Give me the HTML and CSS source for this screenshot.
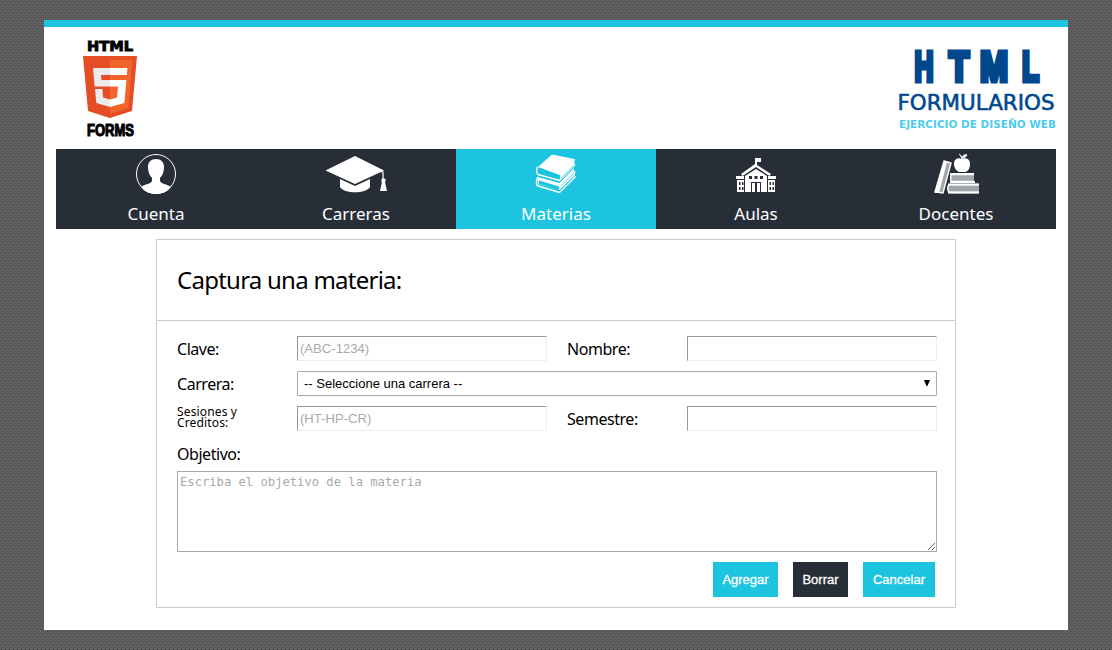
FILE: index.html
```html
<!DOCTYPE html>
<html lang="es">
<head>
<meta charset="utf-8">
<title>HTML Formularios</title>
<link rel="stylesheet" href="styles.css">
</head>
<body>
<div class="page">
  <header class="header">
    <svg class="logo" width="80" height="104" viewBox="0 0 80 104" role="img" aria-label="HTML Forms">
      <text class="logo-html" x="18" y="16" textLength="46" lengthAdjust="spacingAndGlyphs">HTML</text>
      <path fill="#e44d26" d="M14 21h54l-5 55-22 7-22-7z"/>
      <path fill="#f16529" d="M41 25h22.500l-4.300 48L41 79z"/>
      <path fill="#ebebeb" d="M41 33H24l1.600 18.500H41V45h-8.500l-.500-5H41zM41 64.500l-7-2-.500-8.500H26l1.300 14L41 72z"/>
      <path fill="#fff" d="M41 33h17.500l-.700 7H41zM41 45h16.500l-2.200 23L41 72v-7.500l7-2 1-11H41z"/>
      <text class="logo-forms" x="18" y="101" textLength="47" lengthAdjust="spacingAndGlyphs">FORMS</text>
    </svg>
    <svg class="brand" width="164" height="90" viewBox="0 0 164 90" role="img" aria-label="HTML Formularios">
      <g class="brand-html">
        <text x="22.500" y="38.500" textLength="19" lengthAdjust="spacingAndGlyphs">H</text>
        <text x="57" y="38.500" textLength="20" lengthAdjust="spacingAndGlyphs">T</text>
        <text x="88" y="38.500" textLength="28" lengthAdjust="spacingAndGlyphs">M</text>
        <text x="130" y="38.500" textLength="17" lengthAdjust="spacingAndGlyphs">L</text>
      </g>
      <text class="brand-form" x="5.500" y="68" textLength="157" lengthAdjust="spacingAndGlyphs">FORMULARIOS</text>
      <text class="brand-sub" x="7" y="86" textLength="157" lengthAdjust="spacingAndGlyphs">EJERCICIO DE DISEÑO WEB</text>
    </svg>
  </header>
  <nav class="nav">
    <a class="tab">
      <svg width="64" height="50" viewBox="0 0 64 50" fill="#fff"><circle cx="32" cy="25" r="19.500" fill="none" stroke="#fff"/><path d="M32 10c-5 0-8 3-8 8 0 4 1 8 4 11v3c-1 3-7 3-11 6 4 5 9 7 15 7s11-2 15-7c-4-3-10-3-11-6v-3c3-3 4-7 4-11 0-5-3-8-8-8z"/></svg>
      <span>Cuenta</span>
    </a>
    <a class="tab">
      <svg width="64" height="50" viewBox="0 0 64 50" fill="#fff"><path d="M1.500 21.500L31 7l29 14.500L31 35z"/><path d="M16 30l15 7 15-7v8c-4 7-26 7-30 0z"/><path d="M30 20l29 3v11" fill="none" stroke="#fff" stroke-width="1.200"/><circle cx="59.500" cy="31.500" r="2.200"/><path d="M58 33h3l2 9h-7z"/></svg>
      <span>Carreras</span>
    </a>
    <a class="tab active">
      <svg width="64" height="50" viewBox="0 0 64 50" fill="#fff"><path d="M14 18L28 5.500 50 10 35.500 26z"/><path d="M14 28l21.500 6L50 19v8L35.500 41 14 35z" opacity=".95"/><g fill="none" stroke="#fff" stroke-width="1.500"><path d="M14 18c-2 1-2 6 0 7.500l21.500 6L50.500 16c-1-1-1-4 0-6M14 28c-2 2-2 8 0 9l21.500 6.500L51 28c-1-1-1-4 0-6"/></g><path fill="#1cc4e0" d="M15 20.500l20 5.500v3.500l-20-6zM15 31.500l20 6V41l-20-6z"/><path d="M36 24l14-14v6L36 31z"/><path d="M37 29l13-13M37 37l13-13M37 40l13-13" stroke="#1cc4e0" stroke-width=".6"/></svg>
      <span>Materias</span>
    </a>
    <a class="tab">
      <svg width="64" height="50" viewBox="0 0 64 50" fill="#fff"><path d="M31 15V9h6v4h-4v3l14 9-1.500 2L32 18l-13.500 9-1.500-2z"/><path d="M32 20l11 7v16h-6V33H27v10h-6V27z"/><path d="M28 34h3v9h-3zM33 34h3v9h-3zM12 27h8v3h-8zM44 27h8v3h-8zM13 31h7v12h-7zM44 31h7v12h-7z"/><path fill="#282e38" d="M25 27h3v3h-3zM30.500 27h3v3h-3zM36 27h3v3h-3zM15 33h1.500v3H15zM18 33h1.500v3H18zM45.500 33H47v3h-1.500zM48.500 33H50v3h-1.500zM15 38h1.500v3H15zM18 38h1.500v3H18zM45.500 38H47v3h-1.500zM48.500 38H50v3h-1.500z"/></svg>
      <span>Aulas</span>
    </a>
    <a class="tab">
      <svg width="64" height="50" viewBox="0 0 64 50" fill="#fff"><path d="M38 10c-4-2-8 0-8 5 0 4 3 8 6 8h5c3 0 5-4 5-8 0-5-4-7-8-5z"/><path d="M38 10c0-2-1-4-3-5M38 9c1-3 3-4 5-3-1 2-3 3-5 3" stroke="#fff"/><g stroke="#fff" stroke-width="1.400" fill="#a2a6aa"><path d="M20 12l7 2-8 30-8-1z"/><path d="M50 25.500H28c-2 1-2 6 0 7h22M55 35.500H26c-3 1-3 7 0 8h29"/></g><path d="M26 24h24v2H26zM26 32h25v2H26zM24 34.500h31v2H24zM24 42.500h31v2H24zM20 12l3 1-8 31h-4z"/></svg>
      <span>Docentes</span>
    </a>
  </nav>
  <form class="form">
    <h1 class="title">Captura una materia:</h1>
    <div class="fields">
      <label class="label" for="clave">Clave:</label>
      <input class="input" id="clave" placeholder="(ABC-1234)">
      <label class="label second" for="nombre">Nombre:</label>
      <input class="input" id="nombre">
      <label class="label" for="carrera">Carrera:</label>
      <div class="select-box">
        <select class="select" id="carrera"><option>-- Seleccione una carrera --</option></select>
        <svg class="arrow" width="6" height="6" viewBox="0 0 6 6"><path d="M0 0h6L3.500 6h-1z"/></svg>
      </div>
      <label class="label small" for="sesiones"><span>Sesiones y</span><span>Creditos:</span></label>
      <input class="input" id="sesiones" placeholder="(HT-HP-CR)">
      <label class="label second" for="semestre">Semestre:</label>
      <input class="input" id="semestre">
      <label class="label" for="objetivo">Objetivo:</label>
    </div>
    <textarea class="objective" id="objetivo" placeholder="Escriba el objetivo de la materia"></textarea>
    <div class="actions">
      <button class="button add" type="button">Agregar</button>
      <button class="button clear" type="button">Borrar</button>
      <button class="button cancel" type="button">Cancelar</button>
    </div>
  </form>
</div>
</body>
</html>
```
FILE: styles.css
```css
* { box-sizing: border-box; }
body {
  margin: 0;
  padding: 20px 44px;
  height: 650px;
  overflow: hidden;
  font-family: "Noto Sans", sans-serif;
  color: #000;
  background-color: #606060;
  background-image:
    conic-gradient(from 270deg at 1px 1px, #333 90deg, transparent 0),
    conic-gradient(from 270deg at 1px 1px, #444 90deg, transparent 0);
  background-size: 4px 4px, 4px 4px;
  background-position: 1px 1px, 3px 3px;
}
.page {
  height: 610px;
  padding: 0 12px;
  background: #fff;
  border-top: 7px solid #1cc4e0;
}
.header { height: 122px; display: flex; justify-content: space-between; padding: 8px 0 0 13px; }
.logo, .brand { overflow: visible; display: block; }
.brand { margin-top: 7px; }
.logo-html { font: bold 13.5px "DejaVu Sans", sans-serif; stroke: #000; stroke-width: .9px; }
.logo-forms { font: bold 17px "Liberation Sans", sans-serif; stroke: #000; stroke-width: 1.2px; }
.brand-html { font: bold 42px "Liberation Sans", sans-serif; fill: #00488e; stroke: #00488e; stroke-width: 5px; }
.brand-form { font: 22px "DejaVu Sans", sans-serif; fill: #00488e; stroke: #00488e; stroke-width: .6px; }
.brand-sub { font: bold 11px "DejaVu Sans", sans-serif; fill: #4fcbed; }
.nav { display: grid; grid-template-columns: repeat(5, 200px); height: 80px; background: #282e38; }
.tab { display: flex; flex-direction: column; align-items: center; color: #fff; font-size: 17px; line-height: 29px; }
.tab.active { background: #1cc4e0; }
.tab svg { display: block; }
.form { width: 800px; height: 369px; margin: 10px auto 0; border: 1px solid #ccc; }
.title { margin: 0; height: 81px; padding-left: 20px; border-bottom: 1px solid #ccc; font-size: 24px; font-weight: normal; line-height: 79px; letter-spacing: -.75px; }
.fields { display: grid; grid-template-columns: 120px 250px 140px 250px; grid-auto-rows: 25px; row-gap: 10px; padding: 15px 18px 0 20px; }
.label { font-size: 16px; line-height: 26px; letter-spacing: -.45px; white-space: nowrap; }
.second { padding-left: 20px; }
.small { display: flex; flex-direction: column; font-size: 12px; line-height: 11px; letter-spacing: .15px; }
.input { width: 250px; height: 25px; margin: 0; padding: 0 2px; border: 1px solid; border-color: #999 #eee #eee #999; background: #fff; font: 13.1px "Liberation Sans", sans-serif; outline: 0; }
::placeholder { color: #a9a9a9; opacity: 1; }
.select-box { grid-column: 2 / 5; position: relative; }
.select { appearance: none; display: block; width: 640px; height: 25px; padding: 0 6px; border: 1px solid #a9a9a9; border-radius: 1px; background: #fff; color: #000; font: 13px "Liberation Sans", sans-serif; }
.arrow { position: absolute; right: 7px; top: 9px; }
.objective { display: block; width: 760px; height: 81px; margin: 5px 0 0 20px; padding: 2px; border: 1px solid #a9a9a9; font: 12.16px "DejaVu Sans Mono", monospace; line-height: 16px; resize: both; }
.actions { display: flex; justify-content: flex-end; gap: 15px; padding: 10px 20px 0; }
.button { height: 35px; padding: 0; border: 0; color: #fff; background: #1cc4e0; font: 13px "Liberation Sans", sans-serif; -webkit-text-stroke: .3px #fff; }
.add { width: 65px; }
.clear { width: 55px; background: #282e38; }
.cancel { width: 72px; }
```
